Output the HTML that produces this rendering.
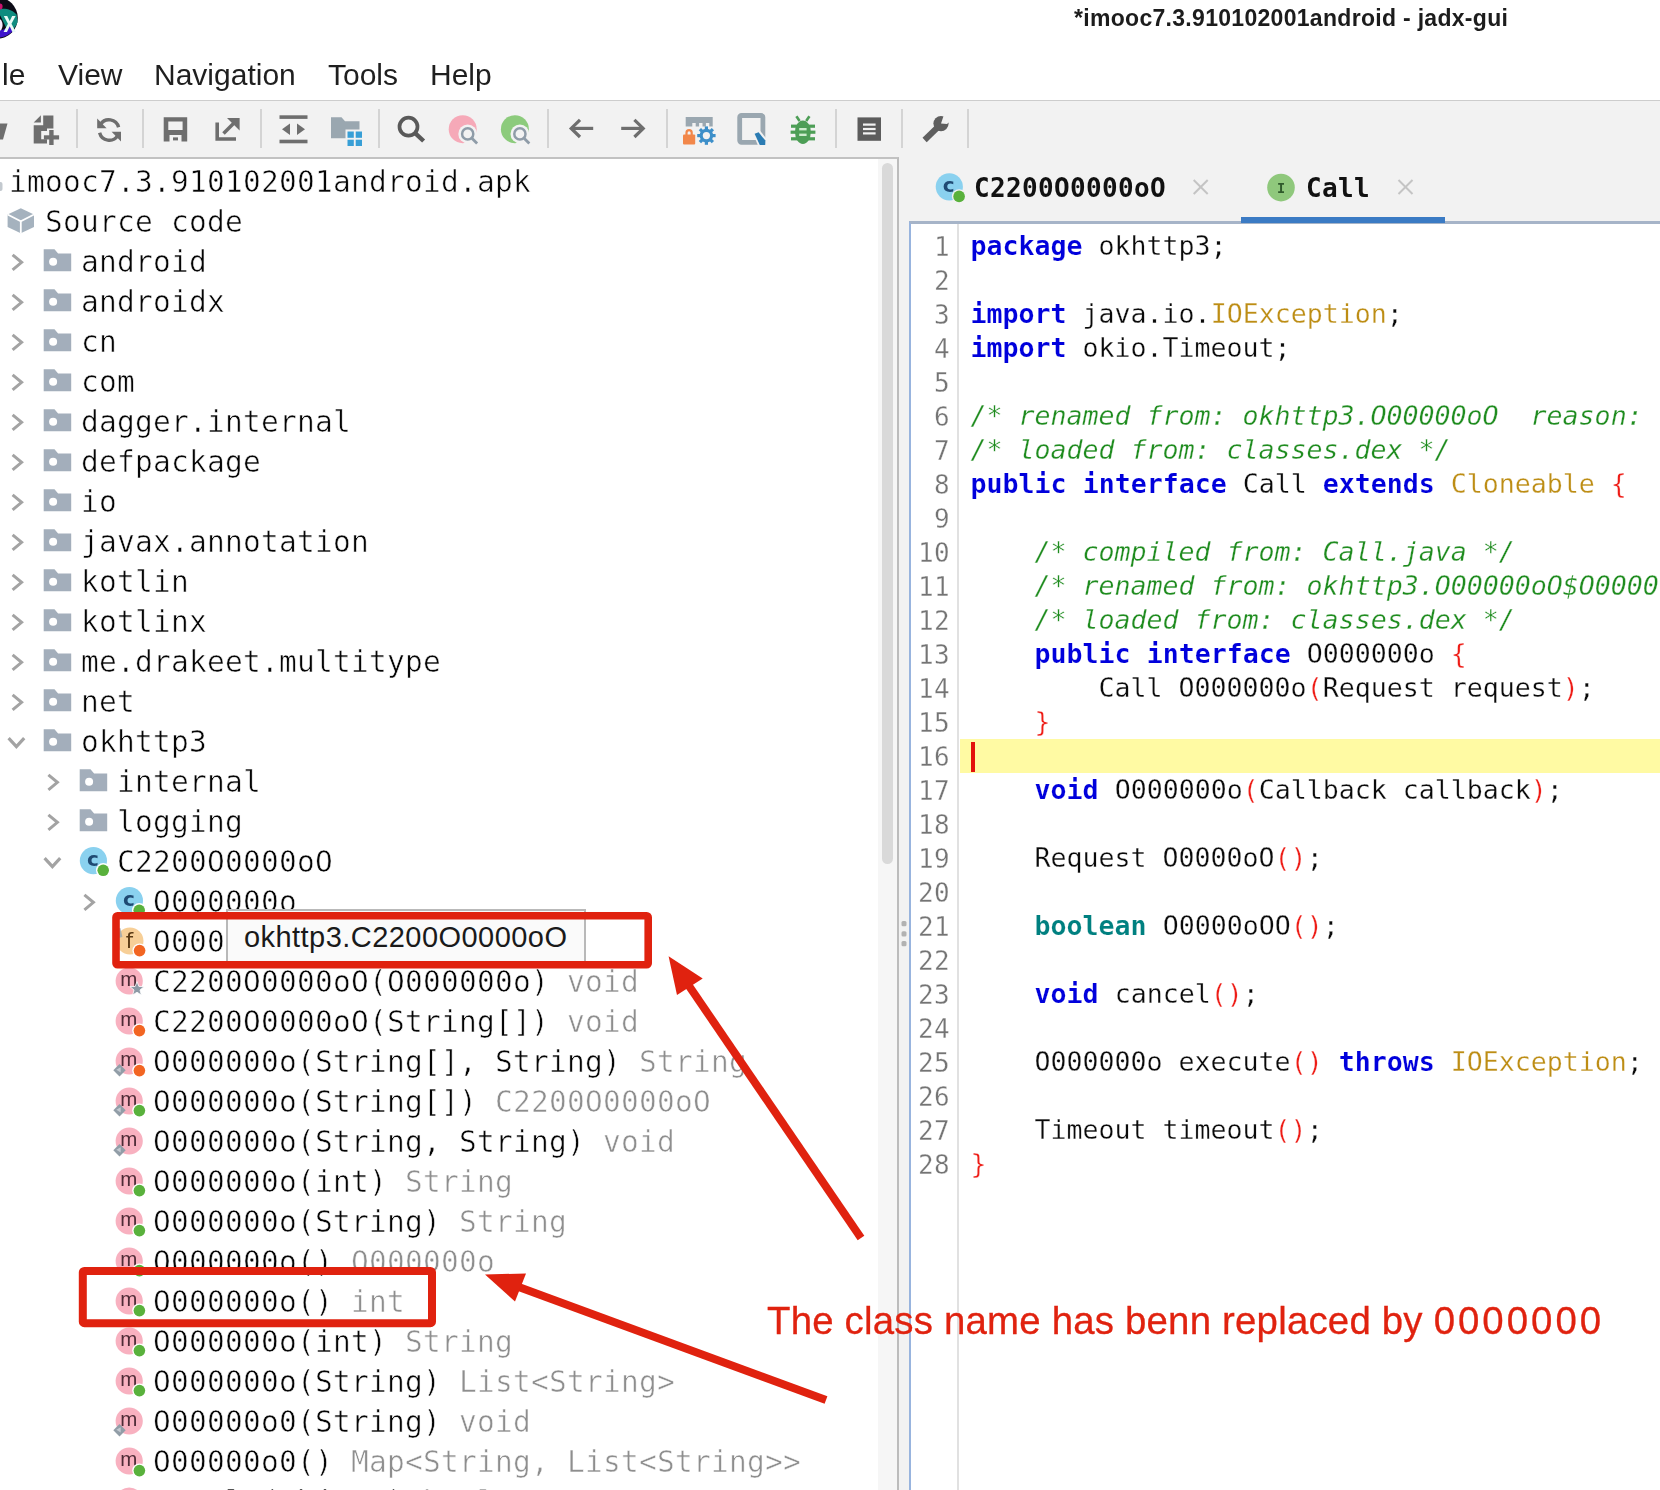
<!DOCTYPE html><html><head><meta charset='utf-8'><title>jadx-gui</title><style>
html,body{margin:0;padding:0;}
body{width:1660px;height:1490px;overflow:hidden;background:#fff;position:relative;filter:blur(0.4px);font-family:"Liberation Sans", "DejaVu Sans", sans-serif;}
.abs{position:absolute;}
#title{position:absolute;left:1074px;top:3px;font:bold 23px/30px "Liberation Sans", "DejaVu Sans", sans-serif;color:#1c1c1c;white-space:nowrap;letter-spacing:0.3px;}
#menu span{position:absolute;top:55px;font:30px/40px "Liberation Sans", "DejaVu Sans", sans-serif;color:#1f1f1f;white-space:nowrap;}
#toolbar{position:absolute;left:0;top:100px;width:1660px;height:1390px;background:#f2f2f2;border-top:1px solid #cdcdcd;box-sizing:border-box;}
.sep{position:absolute;top:109px;width:2px;height:39px;background:#d4d4d4;}
#tree{position:absolute;left:0;top:157px;width:899px;height:1340px;background:#fff;border-top:2px solid #c2c2c2;border-right:2px solid #bcbcbc;box-sizing:border-box;overflow:hidden;}
#track{position:absolute;left:878px;top:159px;width:19px;height:1331px;background:#f6f6f6;}
#thumb{position:absolute;left:882px;top:163px;width:11px;height:701px;background:#d9d9d9;border-radius:6px;}
.row{position:absolute;height:40px;white-space:nowrap;font:29.5px/40px "DejaVu Sans Mono", "Liberation Mono", monospace;letter-spacing:0.24px;color:#050505;}
.row .g{color:#8e8e8e;}
.row{-webkit-text-stroke:0.55px #fff;}
.cl,.ln{-webkit-text-stroke:0.28px #fff;}
.cl .k,.cl .b{-webkit-text-stroke:0.15px #fff;}
.ico{position:absolute;}
#editor{position:absolute;left:909px;top:221px;width:760px;height:1280px;background:#fff;border-left:2px solid #98b4de;border-top:3px solid #a6b4c8;box-sizing:border-box;}
#gutsep{position:absolute;left:957px;top:224px;width:2px;height:1270px;background:#e1e1e1;}
#hl{position:absolute;left:960px;top:739px;width:700px;height:34px;background:#fffaa3;}
#caret{position:absolute;left:971px;top:742px;width:4px;height:30px;background:#e3120b;}
.ln{position:absolute;left:899px;width:51px;text-align:right;font:26px/34px "DejaVu Sans Mono", "Liberation Mono", monospace;color:#747474;letter-spacing:0.35px;height:34px;margin-top:0.6px;}
.cl{position:absolute;left:970.6px;height:34px;white-space:pre;font:26.6px/34px "DejaVu Sans Mono", "Liberation Mono", monospace;letter-spacing:-0.01px;color:#0a0a0a;}
.k{color:#0000dc;font-weight:bold;}
.t{color:#bd8d14;}
.c{color:#1f8c1f;font-style:italic;}
.p{color:#ee1c16;}
.b{color:#008080;font-weight:bold;}
.tab{position:absolute;top:168px;font:bold 26px/40px "DejaVu Sans Mono", "Liberation Mono", monospace;color:#111;white-space:nowrap;letter-spacing:0.35px;}
.x{position:absolute;}
#uline{position:absolute;left:1241px;top:217px;width:204px;height:6px;background:#3b7bc4;}
#tip{position:absolute;left:225.5px;top:909px;width:360px;height:57px;box-sizing:border-box;border:2px solid #b9b9b9;background:#fafafa;font:29px/52px "Liberation Sans", "DejaVu Sans", sans-serif;color:#1a1a1a;padding-left:16.5px;white-space:nowrap;letter-spacing:0.45px;}
#note{position:absolute;left:767px;top:1298px;font:38.4px/46px "Liberation Sans", "DejaVu Sans", sans-serif;color:#e0220f;white-space:nowrap;letter-spacing:0.2px;-webkit-text-stroke:0.3px #e0220f;}
#note b{font-weight:normal;letter-spacing:3px;}
</style></head><body>
<div id="title">*imooc7.3.910102001android - jadx-gui</div>
<div id="menu"><span style="left:-23px">File</span><span style="left:58px">View</span><span style="left:154px">Navigation</span><span style="left:328px">Tools</span><span style="left:430px">Help</span></div>
<svg class="abs" style="left:0;top:0" width="30" height="46" viewBox="0 0 30 46"><circle cx="-3" cy="18" r="20.8" fill="#0c0b16"/><path d="M-3,9.5 C4,7.5 12,9 16.6,14.5 L17.6,22 C15,29 11,31.5 8,31.5 L1,17 Z" fill="#0f8c7f"/><path d="M-3,30.5 C3,30.5 7,28.5 9,25.5 L14,30 C9,35.5 3,37.8 -3,37.8 Z" fill="#3d14cc"/><ellipse cx="-1" cy="25" rx="3.6" ry="6" fill="#f7e9fb"/><ellipse cx="0" cy="6.6" rx="2.6" ry="3" fill="#c9146e"/><text transform="translate(3.4,32.4) scale(0.8,1.08)" font-family="Liberation Sans, sans-serif" font-weight="bold" font-size="28" fill="#e9fbf6">x</text></svg>
<div id="toolbar"></div>
<div class="sep" style="left:76px"></div>
<div class="sep" style="left:142px"></div>
<div class="sep" style="left:260px"></div>
<div class="sep" style="left:378px"></div>
<div class="sep" style="left:547px"></div>
<div class="sep" style="left:666px"></div>
<div class="sep" style="left:835px"></div>
<div class="sep" style="left:901px"></div>
<div class="sep" style="left:967px"></div>
<svg class="abs" style="left:0;top:100px" width="1000" height="60" viewBox="0 100 1000 60"><polygon points="0,123.5 7.5,123.5 3,139.5 0,139.5" fill="#6e6e6e"/><g fill="#6e6e6e"><polygon points="33.7,122.4 40.9,115.2 40.9,122.4"/><polygon points="43.2,115.6 53.4,115.6 53.4,128.6 47,128.6 47,131 41.2,131 41.2,139.2 47,139.2 47,143.6 33.7,143.6 33.7,125.2 43.2,125.2"/><rect x="49.2" y="130" width="4.4" height="15"/><rect x="43.9" y="135.3" width="15.2" height="4.2"/></g><g fill="none" stroke="#6e6e6e" stroke-width="3.4"><path d="M118.6,127.2 A10,10 0 0 0 100.5,124.4"/><path d="M99.6,132.8 A10,10 0 0 0 117.7,135.6"/></g><g fill="#6e6e6e"><polygon points="97.2,118.6 97.2,128.2 106.6,128.2"/><polygon points="121,141.4 121,131.8 111.6,131.8"/></g><path fill="#6e6e6e" fill-rule="evenodd" d="M163.7,117.2 h23.5 v24.3 h-23.5 z M168.3,121.6 v8.4 h14.3 v-8.4 z M169.5,135 v6.5 h12 v-6.5 z M173,137.6 h5 v2.6 h-5 z"/><rect x="173" y="137.8" width="5" height="2.4" fill="#6e6e6e"/><g fill="none" stroke="#6e6e6e" stroke-width="3.6"><polyline points="217.2,122.5 217.2,139 236,139"/><line x1="223.5" y1="133.5" x2="236" y2="121"/></g><polygon points="227,118 239.6,118 239.6,130.6" fill="#6e6e6e"/><g fill="#6e6e6e"><rect x="279.5" y="115.3" width="28" height="3.6"/><rect x="279.5" y="139.7" width="28" height="3.6"/><polygon points="282,129.3 290,123.6 290,135"/><polygon points="305,129.3 297,123.6 297,135"/></g><path fill="#9aa7b0" d="M331,117.2 h10.5 l3.5,4 h14.5 v17 h-28.5 z"/><rect x="345.5" y="129.5" width="18" height="18" fill="#f2f2f2"/><g fill="#389fd6"><rect x="347.5" y="131.5" width="6.3" height="6.3"/><rect x="355.7" y="131.5" width="6.3" height="6.3"/><rect x="347.5" y="139.7" width="6.3" height="6.3"/><rect x="355.7" y="139.7" width="6.3" height="6.3"/></g><g fill="none" stroke="#595959"><circle cx="408.5" cy="126.7" r="9" stroke-width="3.7"/><line x1="415.4" y1="133.4" x2="423.6" y2="141" stroke-width="4.4"/></g><circle cx="462.7" cy="129.2" r="14" fill="#f6a9b8"/><circle cx="467.7" cy="133.89999999999998" r="9.4" fill="#f2f2f2"/><line x1="471.7" y1="138.2" x2="477.7" y2="144.2" stroke="#f2f2f2" stroke-width="6"/><g fill="none" stroke="#8f9ca8"><circle cx="467.7" cy="133.89999999999998" r="5.6" stroke-width="2.5"/><line x1="471.9" y1="138.2" x2="477.09999999999997" y2="143.39999999999998" stroke-width="2.8"/></g><circle cx="514.9" cy="129.2" r="14" fill="#8ccb7c"/><circle cx="519.9" cy="133.89999999999998" r="9.4" fill="#f2f2f2"/><line x1="523.9" y1="138.2" x2="529.9" y2="144.2" stroke="#f2f2f2" stroke-width="6"/><g fill="none" stroke="#8f9ca8"><circle cx="519.9" cy="133.89999999999998" r="5.6" stroke-width="2.5"/><line x1="524.1" y1="138.2" x2="529.3" y2="143.39999999999998" stroke-width="2.8"/></g><g fill="none" stroke="#6e6e6e" stroke-width="3.2"><line x1="571" y1="128.4" x2="593.2" y2="128.4"/><polyline points="580,119.8 571.2,128.4 580,137"/><line x1="621.2" y1="128.4" x2="643.4" y2="128.4"/><polyline points="634.4,119.8 643.2,128.4 634.4,137"/></g><path fill="#9aa7b0" d="M685.7,117 h27 v9.4 h-3.4 v-3.4 h-3.4 v3.4 h-3.4 v-3.4 h-3.4 v3.4 h-3.4 v-3.4 h-3.4 v3.4 h-6.6 z"/><g fill="#f2874a"><rect x="683" y="134.6" width="12.2" height="9.8" rx="1"/><path d="M685.4,135 v-2.2 a3.7,3.7 0 0 1 7.4,0 v2.2 h-2.2 v-2.2 a1.5,1.5 0 0 0 -3,0 v2.2 z"/></g><g stroke="#3d8fc9" fill="none"><circle cx="706.4" cy="135.6" r="5.2" stroke-width="3.2"/><g stroke-width="3.2"><line x1="706.4" y1="135.6" x2="715.6" y2="135.6"/><line x1="706.4" y1="135.6" x2="712.9" y2="142.1"/><line x1="706.4" y1="135.6" x2="706.4" y2="144.8"/><line x1="706.4" y1="135.6" x2="699.9" y2="142.1"/><line x1="706.4" y1="135.6" x2="697.2" y2="135.6"/><line x1="706.4" y1="135.6" x2="699.9" y2="129.1"/><line x1="706.4" y1="135.6" x2="706.4" y2="126.4"/><line x1="706.4" y1="135.6" x2="712.9" y2="129.1"/></g></g><circle cx="706.4" cy="135.6" r="3.6" fill="#f2f2f2"/><rect x="739.7" y="115.5" width="23.2" height="26.8" rx="1.8" fill="none" stroke="#9aa7b0" stroke-width="4.8"/><polygon points="752.6,132.4 759.4,130 767.6,140 767.4,147 758.6,147" fill="#f2f2f2"/><polygon points="754.6,133.8 758.6,132.3 765.4,140.6 765.2,145 759.8,145" fill="#2b7cb3"/><g fill="#4d9e56"><ellipse cx="802.9" cy="132.2" rx="7.9" ry="11.8"/></g><g stroke="#4d9e56" stroke-width="3.2" fill="none"><line x1="791" y1="126.2" x2="815" y2="126.2"/><line x1="790.6" y1="132.2" x2="815.4" y2="132.2"/><line x1="791" y1="138.8" x2="815" y2="138.8"/><line x1="799.6" y1="121" x2="796.4" y2="116.2" stroke-width="2.6"/><line x1="806.2" y1="121" x2="809.4" y2="116.2" stroke-width="2.6"/></g><g stroke="#cdeccd" stroke-width="2.4"><line x1="799.2" y1="129.2" x2="806.6" y2="129.2"/><line x1="799.2" y1="134.8" x2="806.6" y2="134.8"/></g><rect x="857.5" y="117.4" width="23.5" height="23.4" fill="#5c5c5c"/><g stroke="#f2f2f2" stroke-width="2.2"><line x1="863" y1="124.6" x2="875.6" y2="124.6"/><line x1="863" y1="129" x2="875.6" y2="129"/><line x1="863" y1="133.4" x2="875.6" y2="133.4"/></g><g><line x1="924.6" y1="140" x2="939" y2="126" stroke="#5f5f5f" stroke-width="6"/><circle cx="941" cy="123.6" r="7.6" fill="#5f5f5f"/><polygon points="941,123.6 944.4,113.4 952,119.4 947,124" fill="#f2f2f2"/></g></svg>
<div id="tree"></div><div id="track"></div><div id="thumb"></div>
<svg class="abs" style="left:0;top:160px" width="300" height="1330" viewBox="0 160 300 1330"><rect x="-6" y="182" width="8.5" height="9" rx="2" fill="#c3c9cf"/><polygon points="20.8,208.3 34.0,214.5 34.0,227.10000000000002 20.8,233.3 7.600000000000001,227.10000000000002 7.600000000000001,214.5" fill="#a5b2be"/><polyline points="7.600000000000001,214.5 20.8,221.20000000000002 34.0,214.5" fill="none" stroke="#fff" stroke-width="1.8"/><line x1="20.8" y1="221.20000000000002" x2="20.8" y2="233.3" stroke="#fff" stroke-width="1.8"/><polyline points="12.6,254.8 21.6,262.3 12.6,269.8" fill="none" stroke="#a3a3a3" stroke-width="3"/><path fill="#a3aebb" d="M43.7,249.2 h10.8 l3.6,4.3 h13.1 v17.7 h-27.5 z"/><circle cx="53.1" cy="261.8" r="4" fill="#fff"/><polyline points="12.6,294.8 21.6,302.3 12.6,309.8" fill="none" stroke="#a3a3a3" stroke-width="3"/><path fill="#a3aebb" d="M43.7,289.2 h10.8 l3.6,4.3 h13.1 v17.7 h-27.5 z"/><circle cx="53.1" cy="301.8" r="4" fill="#fff"/><polyline points="12.6,334.8 21.6,342.3 12.6,349.8" fill="none" stroke="#a3a3a3" stroke-width="3"/><path fill="#a3aebb" d="M43.7,329.2 h10.8 l3.6,4.3 h13.1 v17.7 h-27.5 z"/><circle cx="53.1" cy="341.8" r="4" fill="#fff"/><polyline points="12.6,374.8 21.6,382.3 12.6,389.8" fill="none" stroke="#a3a3a3" stroke-width="3"/><path fill="#a3aebb" d="M43.7,369.2 h10.8 l3.6,4.3 h13.1 v17.7 h-27.5 z"/><circle cx="53.1" cy="381.8" r="4" fill="#fff"/><polyline points="12.6,414.8 21.6,422.3 12.6,429.8" fill="none" stroke="#a3a3a3" stroke-width="3"/><path fill="#a3aebb" d="M43.7,409.2 h10.8 l3.6,4.3 h13.1 v17.7 h-27.5 z"/><circle cx="53.1" cy="421.8" r="4" fill="#fff"/><polyline points="12.6,454.8 21.6,462.3 12.6,469.8" fill="none" stroke="#a3a3a3" stroke-width="3"/><path fill="#a3aebb" d="M43.7,449.2 h10.8 l3.6,4.3 h13.1 v17.7 h-27.5 z"/><circle cx="53.1" cy="461.8" r="4" fill="#fff"/><polyline points="12.6,494.8 21.6,502.3 12.6,509.8" fill="none" stroke="#a3a3a3" stroke-width="3"/><path fill="#a3aebb" d="M43.7,489.2 h10.8 l3.6,4.3 h13.1 v17.7 h-27.5 z"/><circle cx="53.1" cy="501.8" r="4" fill="#fff"/><polyline points="12.6,534.8 21.6,542.3 12.6,549.8" fill="none" stroke="#a3a3a3" stroke-width="3"/><path fill="#a3aebb" d="M43.7,529.2 h10.8 l3.6,4.3 h13.1 v17.7 h-27.5 z"/><circle cx="53.1" cy="541.8" r="4" fill="#fff"/><polyline points="12.6,574.8 21.6,582.3 12.6,589.8" fill="none" stroke="#a3a3a3" stroke-width="3"/><path fill="#a3aebb" d="M43.7,569.2 h10.8 l3.6,4.3 h13.1 v17.7 h-27.5 z"/><circle cx="53.1" cy="581.8" r="4" fill="#fff"/><polyline points="12.6,614.8 21.6,622.3 12.6,629.8" fill="none" stroke="#a3a3a3" stroke-width="3"/><path fill="#a3aebb" d="M43.7,609.2 h10.8 l3.6,4.3 h13.1 v17.7 h-27.5 z"/><circle cx="53.1" cy="621.8" r="4" fill="#fff"/><polyline points="12.6,654.8 21.6,662.3 12.6,669.8" fill="none" stroke="#a3a3a3" stroke-width="3"/><path fill="#a3aebb" d="M43.7,649.2 h10.8 l3.6,4.3 h13.1 v17.7 h-27.5 z"/><circle cx="53.1" cy="661.8" r="4" fill="#fff"/><polyline points="12.6,694.8 21.6,702.3 12.6,709.8" fill="none" stroke="#a3a3a3" stroke-width="3"/><path fill="#a3aebb" d="M43.7,689.2 h10.8 l3.6,4.3 h13.1 v17.7 h-27.5 z"/><circle cx="53.1" cy="701.8" r="4" fill="#fff"/><polyline points="8.599999999999998,738.2 16.4,746.6 24.2,738.2" fill="none" stroke="#a3a3a3" stroke-width="3.2"/><path fill="#a3aebb" d="M43.7,729.2 h10.8 l3.6,4.3 h13.1 v17.7 h-27.5 z"/><circle cx="53.1" cy="741.8" r="4" fill="#fff"/><polyline points="48.4,774.8 57.4,782.3 48.4,789.8" fill="none" stroke="#a3a3a3" stroke-width="3"/><path fill="#a3aebb" d="M79.7,769.2 h10.8 l3.6,4.3 h13.1 v17.7 h-27.5 z"/><circle cx="89.10000000000001" cy="781.8" r="4" fill="#fff"/><polyline points="48.4,814.8 57.4,822.3 48.4,829.8" fill="none" stroke="#a3a3a3" stroke-width="3"/><path fill="#a3aebb" d="M79.7,809.2 h10.8 l3.6,4.3 h13.1 v17.7 h-27.5 z"/><circle cx="89.10000000000001" cy="821.8" r="4" fill="#fff"/><polyline points="44.6,858.2 52.4,866.6 60.199999999999996,858.2" fill="none" stroke="#a3a3a3" stroke-width="3.2"/><circle cx="93.4" cy="860.7" r="13.6" fill="#8ad1ef"/><text x="92.9" y="866.3000000000001" text-anchor="middle" font-family="DejaVu Sans, Liberation Sans, sans-serif" font-weight="bold" font-size="20" fill="#1f4a73">c</text><circle cx="103.2" cy="870.3000000000001" r="7.2" fill="#fff"/><circle cx="103.2" cy="870.3000000000001" r="5.8" fill="#59b13c"/><polyline points="84.4,894.8 93.4,902.3 84.4,909.8" fill="none" stroke="#a3a3a3" stroke-width="3"/><circle cx="129.4" cy="900.7" r="13.6" fill="#8ad1ef"/><text x="128.9" y="906.3000000000001" text-anchor="middle" font-family="DejaVu Sans, Liberation Sans, sans-serif" font-weight="bold" font-size="20" fill="#1f4a73">c</text><circle cx="139.20000000000002" cy="910.3000000000001" r="7.2" fill="#fff"/><circle cx="139.20000000000002" cy="910.3000000000001" r="5.8" fill="#59b13c"/><circle cx="129.9" cy="941" r="13.6" fill="#f7cf97"/><text x="129.4" y="948" text-anchor="middle" font-family="DejaVu Sans, Liberation Sans, sans-serif" font-weight="normal" font-size="21" fill="#5a3a14">f</text><polygon points="116.4,929 120.4,928 122.4,937 118.4,938" fill="#9aa7b0" opacity=".8"/><circle cx="139.6" cy="950.6" r="7.2" fill="#fff"/><circle cx="139.6" cy="950.6" r="5.8" fill="#f26522"/><circle cx="129.2" cy="981" r="13.6" fill="#f8b1c0"/><text x="128.7" y="986.2" text-anchor="middle" font-family="Liberation Sans, Liberation Sans, sans-serif" font-weight="normal" font-size="20.5" fill="#4d2a35">m</text><polygon points="137.0,981.6 138.9,986.4 144.0,986.7 140.0,990.0 141.3,995.0 137.0,992.2 132.7,995.0 134.0,990.0 130.0,986.7 135.1,986.4" fill="#8d9aa6" stroke="#fff" stroke-width="0.8"/><circle cx="129.2" cy="1021" r="13.6" fill="#f8b1c0"/><text x="128.7" y="1026.2" text-anchor="middle" font-family="Liberation Sans, Liberation Sans, sans-serif" font-weight="normal" font-size="20.5" fill="#4d2a35">m</text><circle cx="139.39999999999998" cy="1030.6" r="7.2" fill="#fff"/><circle cx="139.39999999999998" cy="1030.6" r="5.8" fill="#f26522"/><circle cx="129.2" cy="1061" r="13.6" fill="#f8b1c0"/><text x="128.7" y="1066.2" text-anchor="middle" font-family="Liberation Sans, Liberation Sans, sans-serif" font-weight="normal" font-size="20.5" fill="#4d2a35">m</text><polygon points="113.29999999999998,1070.2 119.49999999999999,1064.0 125.69999999999999,1070.2 119.49999999999999,1076.4" fill="#919da7"/><polygon points="116.29999999999998,1069.8 120.69999999999999,1067.2 120.69999999999999,1072.4" fill="#c3cad1"/><circle cx="139.39999999999998" cy="1070.6" r="7.2" fill="#fff"/><circle cx="139.39999999999998" cy="1070.6" r="5.8" fill="#f26522"/><circle cx="129.2" cy="1101" r="13.6" fill="#f8b1c0"/><text x="128.7" y="1106.2" text-anchor="middle" font-family="Liberation Sans, Liberation Sans, sans-serif" font-weight="normal" font-size="20.5" fill="#4d2a35">m</text><polygon points="113.29999999999998,1110.2 119.49999999999999,1104.0 125.69999999999999,1110.2 119.49999999999999,1116.4" fill="#919da7"/><polygon points="116.29999999999998,1109.8 120.69999999999999,1107.2 120.69999999999999,1112.4" fill="#c3cad1"/><circle cx="139.39999999999998" cy="1110.6" r="7.2" fill="#fff"/><circle cx="139.39999999999998" cy="1110.6" r="5.8" fill="#59b13c"/><circle cx="129.2" cy="1141" r="13.6" fill="#f8b1c0"/><text x="128.7" y="1146.2" text-anchor="middle" font-family="Liberation Sans, Liberation Sans, sans-serif" font-weight="normal" font-size="20.5" fill="#4d2a35">m</text><polygon points="113.29999999999998,1150.2 119.49999999999999,1144.0 125.69999999999999,1150.2 119.49999999999999,1156.4" fill="#919da7"/><polygon points="116.29999999999998,1149.8 120.69999999999999,1147.2 120.69999999999999,1152.4" fill="#c3cad1"/><circle cx="129.2" cy="1181" r="13.6" fill="#f8b1c0"/><text x="128.7" y="1186.2" text-anchor="middle" font-family="Liberation Sans, Liberation Sans, sans-serif" font-weight="normal" font-size="20.5" fill="#4d2a35">m</text><circle cx="139.39999999999998" cy="1190.6" r="7.2" fill="#fff"/><circle cx="139.39999999999998" cy="1190.6" r="5.8" fill="#59b13c"/><circle cx="129.2" cy="1221" r="13.6" fill="#f8b1c0"/><text x="128.7" y="1226.2" text-anchor="middle" font-family="Liberation Sans, Liberation Sans, sans-serif" font-weight="normal" font-size="20.5" fill="#4d2a35">m</text><circle cx="139.39999999999998" cy="1230.6" r="7.2" fill="#fff"/><circle cx="139.39999999999998" cy="1230.6" r="5.8" fill="#59b13c"/><circle cx="129.2" cy="1261" r="13.6" fill="#f8b1c0"/><text x="128.7" y="1266.2" text-anchor="middle" font-family="Liberation Sans, Liberation Sans, sans-serif" font-weight="normal" font-size="20.5" fill="#4d2a35">m</text><circle cx="139.39999999999998" cy="1270.6" r="7.2" fill="#fff"/><circle cx="139.39999999999998" cy="1270.6" r="5.8" fill="#59b13c"/><circle cx="129.2" cy="1301" r="13.6" fill="#f8b1c0"/><text x="128.7" y="1306.2" text-anchor="middle" font-family="Liberation Sans, Liberation Sans, sans-serif" font-weight="normal" font-size="20.5" fill="#4d2a35">m</text><circle cx="139.39999999999998" cy="1310.6" r="7.2" fill="#fff"/><circle cx="139.39999999999998" cy="1310.6" r="5.8" fill="#59b13c"/><circle cx="129.2" cy="1341" r="13.6" fill="#f8b1c0"/><text x="128.7" y="1346.2" text-anchor="middle" font-family="Liberation Sans, Liberation Sans, sans-serif" font-weight="normal" font-size="20.5" fill="#4d2a35">m</text><circle cx="139.39999999999998" cy="1350.6" r="7.2" fill="#fff"/><circle cx="139.39999999999998" cy="1350.6" r="5.8" fill="#59b13c"/><circle cx="129.2" cy="1381" r="13.6" fill="#f8b1c0"/><text x="128.7" y="1386.2" text-anchor="middle" font-family="Liberation Sans, Liberation Sans, sans-serif" font-weight="normal" font-size="20.5" fill="#4d2a35">m</text><circle cx="139.39999999999998" cy="1390.6" r="7.2" fill="#fff"/><circle cx="139.39999999999998" cy="1390.6" r="5.8" fill="#59b13c"/><circle cx="129.2" cy="1421" r="13.6" fill="#f8b1c0"/><text x="128.7" y="1426.2" text-anchor="middle" font-family="Liberation Sans, Liberation Sans, sans-serif" font-weight="normal" font-size="20.5" fill="#4d2a35">m</text><polygon points="113.29999999999998,1430.2 119.49999999999999,1424.0 125.69999999999999,1430.2 119.49999999999999,1436.4" fill="#919da7"/><polygon points="116.29999999999998,1429.8 120.69999999999999,1427.2 120.69999999999999,1432.4" fill="#c3cad1"/><circle cx="129.2" cy="1461" r="13.6" fill="#f8b1c0"/><text x="128.7" y="1466.2" text-anchor="middle" font-family="Liberation Sans, Liberation Sans, sans-serif" font-weight="normal" font-size="20.5" fill="#4d2a35">m</text><circle cx="139.39999999999998" cy="1470.6" r="7.2" fill="#fff"/><circle cx="139.39999999999998" cy="1470.6" r="5.8" fill="#59b13c"/><circle cx="129.2" cy="1501" r="13.6" fill="#f8b1c0"/><text x="128.7" y="1506.2" text-anchor="middle" font-family="Liberation Sans, Liberation Sans, sans-serif" font-weight="normal" font-size="20.5" fill="#4d2a35">m</text><circle cx="139.39999999999998" cy="1510.6" r="7.2" fill="#fff"/><circle cx="139.39999999999998" cy="1510.6" r="5.8" fill="#59b13c"/></svg>
<div class="row" style="left:9px;top:162px">imooc7.3.910102001android.apk</div>
<div class="row" style="left:45px;top:202px">Source code</div>
<div class="row" style="left:81px;top:242px">android</div>
<div class="row" style="left:81px;top:282px">androidx</div>
<div class="row" style="left:81px;top:322px">cn</div>
<div class="row" style="left:81px;top:362px">com</div>
<div class="row" style="left:81px;top:402px">dagger.internal</div>
<div class="row" style="left:81px;top:442px">defpackage</div>
<div class="row" style="left:81px;top:482px">io</div>
<div class="row" style="left:81px;top:522px">javax.annotation</div>
<div class="row" style="left:81px;top:562px">kotlin</div>
<div class="row" style="left:81px;top:602px">kotlinx</div>
<div class="row" style="left:81px;top:642px">me.drakeet.multitype</div>
<div class="row" style="left:81px;top:682px">net</div>
<div class="row" style="left:81px;top:722px">okhttp3</div>
<div class="row" style="left:117px;top:762px">internal</div>
<div class="row" style="left:117px;top:802px">logging</div>
<div class="row" style="left:117px;top:842px">C2200O0000oO</div>
<div class="row" style="left:153px;top:882px">O000000o</div>
<div class="row" style="left:153px;top:922px">O000</div>
<div class="row" style="left:153px;top:962px">C2200O0000oO(O000000o) <span class="g">void</span></div>
<div class="row" style="left:153px;top:1002px">C2200O0000oO(String[]) <span class="g">void</span></div>
<div class="row" style="left:153px;top:1042px">O000000o(String[], String) <span class="g">String</span></div>
<div class="row" style="left:153px;top:1082px">O000000o(String[]) <span class="g">C2200O0000oO</span></div>
<div class="row" style="left:153px;top:1122px">O000000o(String, String) <span class="g">void</span></div>
<div class="row" style="left:153px;top:1162px">O000000o(int) <span class="g">String</span></div>
<div class="row" style="left:153px;top:1202px">O000000o(String) <span class="g">String</span></div>
<div class="row" style="left:153px;top:1242px">O000000o() <span class="g">O000000o</span></div>
<div class="row" style="left:153px;top:1282px">O000000o() <span class="g">int</span></div>
<div class="row" style="left:153px;top:1322px">O000000o(int) <span class="g">String</span></div>
<div class="row" style="left:153px;top:1362px">O000000o(String) <span class="g">List&lt;String&gt;</span></div>
<div class="row" style="left:153px;top:1402px">O00000o0(String) <span class="g">void</span></div>
<div class="row" style="left:153px;top:1442px">O00000o0() <span class="g">Map&lt;String, List&lt;String&gt;&gt;</span></div>
<div class="row" style="left:153px;top:1482px">equals(Object) <span class="g">boolean</span></div>
<div id="editor"></div><div id="gutsep"></div><div id="hl"></div><div id="caret"></div>
<div class="ln" style="top:229px">1</div>
<div class="cl" style="top:229px"><span class="k">package</span> okhttp3;</div>
<div class="ln" style="top:263px">2</div>
<div class="ln" style="top:297px">3</div>
<div class="cl" style="top:297px"><span class="k">import</span> java.io.<span class="t">IOException</span>;</div>
<div class="ln" style="top:331px">4</div>
<div class="cl" style="top:331px"><span class="k">import</span> okio.Timeout;</div>
<div class="ln" style="top:365px">5</div>
<div class="ln" style="top:399px">6</div>
<div class="cl" style="top:399px"><span class="c">/* renamed from: okhttp3.O00000oO  reason: default package */</span></div>
<div class="ln" style="top:433px">7</div>
<div class="cl" style="top:433px"><span class="c">/* loaded from: classes.dex */</span></div>
<div class="ln" style="top:467px">8</div>
<div class="cl" style="top:467px"><span class="k">public</span> <span class="k">interface</span> Call <span class="k">extends</span> <span class="t">Cloneable</span> <span class="p">{</span></div>
<div class="ln" style="top:501px">9</div>
<div class="ln" style="top:535px">10</div>
<div class="cl" style="top:535px">    <span class="c">/* compiled from: Call.java */</span></div>
<div class="ln" style="top:569px">11</div>
<div class="cl" style="top:569px">    <span class="c">/* renamed from: okhttp3.O00000oO$O000000o */</span></div>
<div class="ln" style="top:603px">12</div>
<div class="cl" style="top:603px">    <span class="c">/* loaded from: classes.dex */</span></div>
<div class="ln" style="top:637px">13</div>
<div class="cl" style="top:637px">    <span class="k">public</span> <span class="k">interface</span> O000000o <span class="p">{</span></div>
<div class="ln" style="top:671px">14</div>
<div class="cl" style="top:671px">        Call O000000o<span class="p">(</span>Request request<span class="p">)</span>;</div>
<div class="ln" style="top:705px">15</div>
<div class="cl" style="top:705px">    <span class="p">}</span></div>
<div class="ln" style="top:739px">16</div>
<div class="ln" style="top:773px">17</div>
<div class="cl" style="top:773px">    <span class="k">void</span> O000000o<span class="p">(</span>Callback callback<span class="p">)</span>;</div>
<div class="ln" style="top:807px">18</div>
<div class="ln" style="top:841px">19</div>
<div class="cl" style="top:841px">    Request O0000oO<span class="p">()</span>;</div>
<div class="ln" style="top:875px">20</div>
<div class="ln" style="top:909px">21</div>
<div class="cl" style="top:909px">    <span class="b">boolean</span> O0000oOO<span class="p">()</span>;</div>
<div class="ln" style="top:943px">22</div>
<div class="ln" style="top:977px">23</div>
<div class="cl" style="top:977px">    <span class="k">void</span> cancel<span class="p">()</span>;</div>
<div class="ln" style="top:1011px">24</div>
<div class="ln" style="top:1045px">25</div>
<div class="cl" style="top:1045px">    O000000o execute<span class="p">()</span> <span class="k">throws</span> <span class="t">IOException</span>;</div>
<div class="ln" style="top:1079px">26</div>
<div class="ln" style="top:1113px">27</div>
<div class="cl" style="top:1113px">    Timeout timeout<span class="p">()</span>;</div>
<div class="ln" style="top:1147px">28</div>
<div class="cl" style="top:1147px"><span class="p">}</span></div>
<div class="tab" style="left:974px">C2200O0000oO</div>
<div class="tab" style="left:1306px">Call</div>
<div id="uline"></div>
<svg class="abs" style="left:920px;top:160px" width="520" height="60" viewBox="920 160 520 60"><circle cx="949.3" cy="186.8" r="13.6" fill="#8ad1ef"/><text x="948.8" y="192.4" text-anchor="middle" font-family="DejaVu Sans, Liberation Sans, sans-serif" font-weight="bold" font-size="20" fill="#1f4a73">c</text><circle cx="959.0999999999999" cy="196.4" r="7.2" fill="#f2f2f2"/><circle cx="959.0999999999999" cy="196.4" r="5.8" fill="#59b13c"/><circle cx="1281" cy="187.6" r="13.8" fill="#8fc87c"/><text x="1281" y="192.6" text-anchor="middle" font-family="DejaVu Sans Mono, monospace" font-weight="bold" font-size="13.5" fill="#2f5a2b">I</text><g stroke="#c4c4c4" stroke-width="2"><line x1="1193.7" y1="180" x2="1207.7" y2="194"/><line x1="1207.7" y1="180" x2="1193.7" y2="194"/></g><g stroke="#c4c4c4" stroke-width="2"><line x1="1398.5" y1="180" x2="1412.5" y2="194"/><line x1="1412.5" y1="180" x2="1398.5" y2="194"/></g></svg><svg class="abs" style="left:899px;top:918px" width="10" height="34" viewBox="899 918 10 34"><g fill="#b2b2b2"><rect x="901.5" y="921" width="5" height="5.2" rx="1.5"/><rect x="901.5" y="931.2" width="5" height="5.2" rx="1.5"/><rect x="901.5" y="941" width="5" height="5.2" rx="1.5"/></g></svg>
<div id="tip">okhttp3.C2200O0000oO</div>
<svg class="abs" style="left:0;top:0;pointer-events:none" width="1660" height="1490" viewBox="0 0 1660 1490">
<rect x="116" y="915.8" width="532.2" height="49" rx="1.5" fill="none" stroke="#e0220f" stroke-width="7.6"/>
<rect x="82.8" y="1271" width="349.2" height="52.2" rx="1.5" fill="none" stroke="#e0220f" stroke-width="8"/>
<g fill="#e0220f" stroke="#e0220f">
<line x1="861" y1="1238" x2="686" y2="981.5" stroke-width="8"/>
<polygon points="668.6,956.2 702.7,978.4 677,995" stroke="none"/>
<line x1="826" y1="1400" x2="516" y2="1286" stroke-width="8"/>
<polygon points="485,1274.5 526,1273.4 515,1301.6" stroke="none"/>
</g></svg>
<div id="note">The class name has benn replaced by <b>0000000</b></div>
</body></html>
